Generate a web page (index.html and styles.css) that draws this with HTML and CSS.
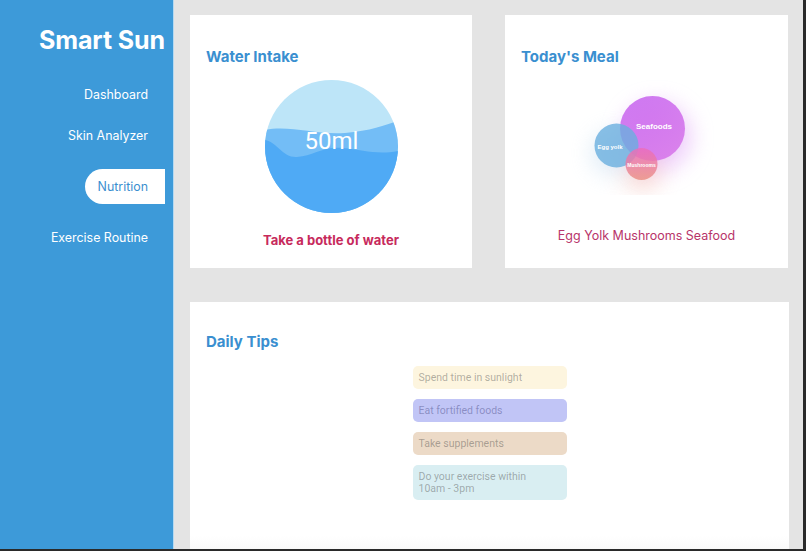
FILE: index.html
```html
<!DOCTYPE html>
<html>
<head>
<meta charset="utf-8">
<link rel="stylesheet" href="styles.css">
</head>
<body>
<div class="app">
  <aside class="sidebar">
    <h1 class="brand">Smart Sun</h1>
    <nav class="nav">
      <a class="nav-item nav-dash">Dashboard</a>
      <a class="nav-item nav-skin">Skin Analyzer</a>
      <a class="nav-item nav-active">Nutrition</a>
      <a class="nav-item nav-ex">Exercise Routine</a>
    </nav>
  </aside>
  <main class="main">
    <div class="row">
      <section class="card">
        <h2 class="card-title">Water Intake</h2>
        <div class="water">
          <svg width="133" height="133" viewBox="0 0 133 133">
            <defs>
              <clipPath id="wc"><circle cx="66.5" cy="66.5" r="66.5"/></clipPath>
            </defs>
            <g clip-path="url(#wc)">
              <rect x="0" y="0" width="133" height="133" fill="#bde5f8"/>
              <path d="M0,50 C25,45 50,55 80,53 C105,51 120,45 133,41 L133,133 L0,133 Z" fill="#73bdf6"/>
              <path d="M0,60 C12,62 18,78 32,77 C48,76 58,66 78,68 C98,70 112,75 133,71 L133,133 L0,133 Z" fill="#4faaf5"/>
            </g>
            <text x="66.5" y="69" text-anchor="middle" class="water-label">50ml</text>
          </svg>
        </div>
        <p class="water-note">Take a bottle of water</p>
      </section>
      <section class="card">
        <h2 class="card-title">Today's Meal</h2>
        <div class="meal">
          <svg width="200" height="120" viewBox="0 0 200 120">
            <defs>
              <filter id="blur" x="-60%" y="-60%" width="220%" height="220%"><feGaussianBlur stdDeviation="11"/></filter>
              <linearGradient id="gSea" x1="0" y1="0" x2="0.6" y2="1">
                <stop offset="0" stop-color="#c766f0"/>
                <stop offset="1" stop-color="#d675ea"/>
              </linearGradient>
              <linearGradient id="gMush" x1="0" y1="0" x2="0" y2="1">
                <stop offset="0" stop-color="#ec6cbc"/>
                <stop offset="1" stop-color="#ea8e82"/>
              </linearGradient>
            </defs>
            <circle cx="110" cy="62" r="34" fill="#dc9af5" opacity="0.5" filter="url(#blur)"/>
            <circle cx="95" cy="98" r="18" fill="#f2b0a6" opacity="0.45" filter="url(#blur)"/>
            <circle cx="66" cy="78" r="22" fill="#b5d1ea" opacity="0.4" filter="url(#blur)"/>
            <circle cx="105.5" cy="53.5" r="32.5" fill="url(#gSea)" opacity="0.88"/>
            <circle cx="69.5" cy="70.5" r="22" fill="#6aafdf" opacity="0.8"/>
            <circle cx="94.5" cy="89" r="16" fill="url(#gMush)" opacity="0.82"/>
            <text x="107" y="54" text-anchor="middle" class="b-sea">Seafoods</text>
            <text x="63" y="74" text-anchor="middle" class="b-egg">Egg yolk</text>
            <text x="94.5" y="91.5" text-anchor="middle" class="b-mush">Mushrooms</text>
          </svg>
        </div>
        <p class="meal-note">Egg Yolk Mushrooms Seafood</p>
      </section>
    </div>
    <section class="card card-wide">
      <h2 class="card-title">Daily Tips</h2>
      <ul class="tips">
        <li class="tip tip-yellow">Spend time in sunlight</li>
        <li class="tip tip-purple">Eat fortified foods</li>
        <li class="tip tip-tan">Take supplements</li>
        <li class="tip tip-cyan">Do your exercise within<br>10am - 3pm</li>
      </ul>
    </section>
  </main>
</div>
</body>
</html>
```

FILE: styles.css
```css
* { box-sizing: border-box; }
html, body { margin: 0; padding: 0; }
body {
  background: #2a2a2a;
  font-family: "Inter", "Liberation Sans", sans-serif;
  width: 806px;
  height: 551px;
  overflow: hidden;
}
.app {
  display: flex;
  width: 803px;
  height: 549px;
  background: #e4e4e4;
  overflow: hidden;
}
.sidebar {
  width: 174px;
  flex: none;
  background: #3d9ad9;
  border-right: 1px solid #b5d9f1;
  display: flex;
  flex-direction: column;
  align-items: flex-end;
  padding: 24px 8px 0 0;
}
.brand {
  margin: 0;
  color: #fff;
  font-size: 25px;
  line-height: 32px;
  font-weight: 700;
  letter-spacing: -0.1px;
}
.nav {
  display: flex;
  flex-direction: column;
  align-items: flex-end;
  margin-top: 21px;
}
.nav-item {
  display: block;
  height: 35px;
  line-height: 35px;
  padding: 0 17px 0 12px;
  color: #fff;
  font-size: 12.4px;
}
.nav-skin { margin-top: 6px; }
.nav-active {
  margin-top: 16px;
  background: #fff;
  color: #3b8fcf;
  border-radius: 18px 0 0 18px;
  width: 80px;
  text-align: right;
}
.nav-ex { margin-top: 16px; }
.main {
  flex: 1;
  padding: 15px 14px 0 16px;
}
.row {
  display: grid;
  grid-template-columns: 282px 283px;
  column-gap: 33px;
}
.card {
  background: #fff;
  height: 253px;
  padding: 32px 16px 0;
}
.card-title {
  margin: 0;
  font-size: 15px;
  line-height: 20px;
  font-weight: 700;
  color: #3a8fd0;
}
.water {
  display: flex;
  justify-content: center;
  margin-top: 13px;
}
.water svg { display: block; }
.water-label {
  font-family: "Roboto", sans-serif;
  font-size: 24px;
  fill: #fff;
}
.water-note {
  margin: 18px 0 0;
  text-align: center;
  font-size: 13px;
  line-height: 18px;
  font-weight: 700;
  color: #c72a5c;
}
.meal {
  display: flex;
  justify-content: center;
  margin-top: 8px;
}
.meal svg { display: block; }
.b-sea { font-family: "Liberation Sans", sans-serif; font-size: 8px; font-weight: 700; fill: #fff; }
.b-egg { font-family: "Liberation Sans", sans-serif; font-size: 6px; font-weight: 700; fill: #fff; }
.b-mush { font-family: "Liberation Sans", sans-serif; font-size: 5px; font-weight: 700; fill: #fff; }
.meal-note {
  margin: 32px 0 0;
  text-align: center;
  font-size: 12.5px;
  line-height: 18px;
  color: #b8356a;
}
.card-wide {
  margin-top: 34px;
  height: 260px;
  padding-top: 30px;
  background: linear-gradient(to bottom, #fff 90%, #f4f4f4 100%);
}
.tips {
  list-style: none;
  margin: 14px auto 0;
  padding: 0;
  width: 154px;
  display: flex;
  flex-direction: column;
  gap: 10px;
}
.tip {
  font-family: "Roboto", sans-serif;
  font-size: 10.5px;
  line-height: 12px;
  padding: 5.5px 6px;
  border-radius: 5px;
  color: rgba(70, 70, 70, 0.42);
}
.tip-yellow { background: #fdf5df; }
.tip-purple { background: #c1c5f6; color: rgba(70, 70, 130, 0.45); }
.tip-tan { background: #ecdac7; }
.tip-cyan { background: #d9eef2; }
```
